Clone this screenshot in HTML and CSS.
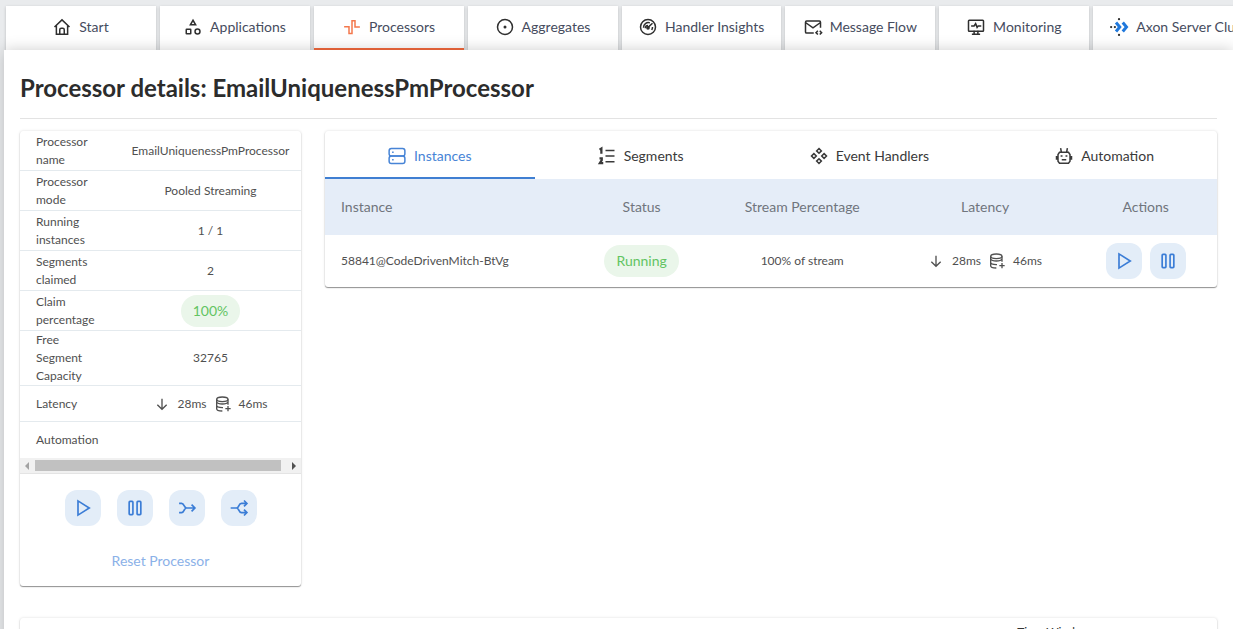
FILE: index.html
```html
<!DOCTYPE html>
<html lang="en">
<head>
<meta charset="utf-8">
<title>Processor details</title>
<link rel="stylesheet" href="styles.css">
</head>
<body>
<svg class="defs" aria-hidden="true">
  <symbol id="play" viewBox="0 0 24 24"><path d="M6 3.500v17l13.500-8.500z"/></symbol>
  <symbol id="pause" viewBox="0 0 24 24"><rect x="5" y="4" width="4.500" height="16" rx="1"/><rect x="14.500" y="4" width="4.500" height="16" rx="1"/></symbol>
  <symbol id="merge" viewBox="0 0 24 24"><path d="M2.500 6.500h3c3.500 0 2.500 5.500 6 5.500-3.500 0-2.500 5.500-6 5.500h-3M11 12h10M17.500 8l4 4-4 4"/></symbol>
  <symbol id="split" viewBox="0 0 24 24"><path d="M2 12h7c3.500 0 2-5.500 6-5.500h6M9 12c3.500 0 2 5.500 6 5.500h6M18 3l3.500 3.500L18 10M18 14l3.500 3.500L18 21"/></symbol>
  <symbol id="down" viewBox="0 0 24 24"><path d="M12 4v16M5 13l7 7 7-7"/></symbol>
  <symbol id="database" viewBox="0 0 24 24"><ellipse cx="11" cy="5" rx="8.500" ry="3.500"/><path d="M2.500 5v14c0 2 3.500 3.500 8.500 3.500M2.500 14c0 2 3.500 3.500 8.500 3.500h1M19.500 5v8M2.500 9c1 2 4 3 8.500 3s7.500-1 8.500-3M19.500 15v8M15.500 19h8"/></symbol>
</svg>

<nav class="nav">
  <a class="nav-tab" href="#start"><svg class="icon" viewBox="0 0 24 24"><path d="M2 12 12 2.500 22 12M4.500 10v11.500h15V10M9 21.500v-6a2 2 0 0 1 2-2h2a2 2 0 0 1 2 2v6"/></svg>Start</a>
  <a class="nav-tab" href="#applications"><svg class="icon" viewBox="0 0 24 24"><path d="m12 3 3.500 6h-7z"/><rect x="3" y="15" width="6" height="6" rx=".5"/><circle cx="18" cy="18" r="3.300"/></svg>Applications</a>
  <a class="nav-tab nav-tab-active" href="#processors"><svg class="icon" viewBox="0 0 24 24"><path d="M1.500 11.500H8v9h4v-17h4V12h6.500"/></svg>Processors</a>
  <a class="nav-tab" href="#aggregates"><svg class="icon" viewBox="0 0 24 24"><circle cx="12" cy="12" r="10"/><circle class="solid" cx="12" cy="12" r="1"/></svg>Aggregates</a>
  <a class="nav-tab" href="#insights"><svg class="icon" viewBox="0 0 24 24"><circle cx="12" cy="12" r="10"/><path d="M6 13a6.500 6.500 0 0 1 8.500-6.500M12 12.500 18 7M8.500 13.500a3.500 3.500 0 0 1 3.500-3.500M18 12c0 2-.5 3-1 4"/><circle class="solid" cx="12" cy="13" r="1.500"/></svg>Handler Insights</a>
  <a class="nav-tab" href="#messages"><svg class="icon" viewBox="0 0 24 24"><path d="M13 20H3.500A1.500 1.500 0 0 1 2 18.500v-13A1.500 1.500 0 0 1 3.500 4h17A1.500 1.500 0 0 1 22 5.500V13M2 6l10 7 10-7M18.500 17 16 19.500l2.500 2.500M21 17l2.500 2.500L21 22"/></svg>Message Flow</a>
  <a class="nav-tab" href="#monitoring"><svg class="icon" viewBox="0 0 24 24"><rect x="2" y="3" width="20" height="14.500" rx="1"/><path d="M5.500 10.500h4l2-3 2 5 1.500-2h4M9.500 17v4M14.500 17v4M6.500 21.500h11"/></svg>Monitoring</a>
  <a class="nav-tab" href="#cluster"><svg class="icon" viewBox="0 0 24 24"><path class="chevrons" d="m8 6 5 6-5 6M17 6l5 6-5 6"/><g class="dots"><circle cx="12" cy="1.500" r="1.500"/><circle cx="12" cy="22.500" r="1.500"/><circle cx="1.500" cy="12" r="1.500"/><circle cx="6.500" cy="12" r="1.500"/></g></svg>Axon Server Cluster</a>
</nav>

<main class="page">
  <h1 class="title">Processor details: EmailUniquenessPmProcessor</h1>
  <div class="columns">
    <section class="card details">
      <table class="facts">
        <tbody>
          <tr><th scope="row">Processor name</th><td>EmailUniquenessPmProcessor</td></tr>
          <tr><th scope="row">Processor mode</th><td>Pooled Streaming</td></tr>
          <tr><th scope="row">Running instances</th><td>1 / 1</td></tr>
          <tr><th scope="row">Segments claimed</th><td>2</td></tr>
          <tr><th scope="row">Claim percentage</th><td><span class="chip">100%</span></td></tr>
          <tr><th scope="row">Free Segment Capacity</th><td>32765</td></tr>
          <tr class="single"><th scope="row">Latency</th><td><span class="latency"><svg class="icon"><use href="#down"/></svg>28ms<svg class="icon"><use href="#database"/></svg>46ms</span></td></tr>
          <tr class="single"><th scope="row">Automation</th><td></td></tr>
        </tbody>
      </table>
      <div class="scroll-track"><span class="scroll-left"></span><span class="scroll-thumb"></span><span class="scroll-right"></span></div>
      <div class="actions">
        <button class="action" aria-label="Start"><svg class="icon"><use href="#play"/></svg></button>
        <button class="action" aria-label="Pause"><svg class="icon"><use href="#pause"/></svg></button>
        <button class="action" aria-label="Merge"><svg class="icon"><use href="#merge"/></svg></button>
        <button class="action" aria-label="Split"><svg class="icon"><use href="#split"/></svg></button>
      </div>
      <button class="reset">Reset Processor</button>
    </section>

    <section class="card instances">
      <div class="tabs" role="tablist">
        <button class="tab tab-active" role="tab" aria-selected="true"><svg class="icon" viewBox="0 0 24 24"><rect x="1.500" y="2" width="21" height="10" rx="3"/><rect x="1.500" y="12" width="21" height="10" rx="3"/><path d="M5.500 7h2M5.500 17h2"/></svg>Instances</button>
        <button class="tab" role="tab"><svg class="icon" viewBox="0 0 24 24"><path d="M10 4.500h12M10 12h12M10 19.500h12"/><path class="digits" d="M2 3.500 4.500 2v7M2 15h3v2.500L2.500 21.500H7"/></svg>Segments</button>
        <button class="tab" role="tab"><svg class="icon" viewBox="0 0 24 24"><path d="m12 2 3.200 3.200L12 8.400 8.800 5.200zM12 15.600l3.200 3.200L12 22l-3.200-3.200zM5.200 8.800 8.400 12l-3.200 3.200L2 12zM18.800 8.800 22 12l-3.200 3.200-3.200-3.200z"/></svg>Event Handlers</button>
        <button class="tab" role="tab"><svg class="icon" viewBox="0 0 24 24"><path d="M6 7h12l2 3v9l-2 2.500H6L4 19v-9zM8.500 7l-1-5.500M15.500 7l1-5.500M2 12v5M22 12v5M9 17h6M7.500 12h2.500M14 12h2.500"/></svg>Automation</button>
      </div>
      <table class="grid">
        <thead>
          <tr><th scope="col" class="col-instance">Instance</th><th scope="col" class="col-status">Status</th><th scope="col" class="col-stream">Stream Percentage</th><th scope="col" class="col-latency">Latency</th><th scope="col">Actions</th></tr>
        </thead>
        <tbody>
          <tr>
            <td class="col-instance">58841@CodeDrivenMitch-BtVg</td>
            <td><span class="chip">Running</span></td>
            <td>100% of stream</td>
            <td><span class="latency"><svg class="icon"><use href="#down"/></svg>28ms<svg class="icon"><use href="#database"/></svg>46ms</span></td>
            <td><div class="row-actions">
              <button class="action" aria-label="Start instance"><svg class="icon"><use href="#play"/></svg></button>
              <button class="action" aria-label="Pause instance"><svg class="icon"><use href="#pause"/></svg></button>
            </div></td>
          </tr>
        </tbody>
      </table>
    </section>
  </div>
  <section class="card metrics"><span class="metrics-label">Time Window</span></section>
</main>
</body>
</html>
```
FILE: styles.css
```css
* { box-sizing: border-box; }

body {
  margin: 0;
  height: 100vh;
  overflow: hidden;
  background: #e9ebed;
  color: #505050;
  font-family: Lato, sans-serif;
  font-size: 12px;
  line-height: 18px;
}

button { border: 0; background: none; font: inherit; cursor: pointer; }

.defs { position: absolute; width: 0; height: 0; }

.icon {
  flex: none;
  width: 18px;
  height: 18px;
  overflow: visible;
  fill: none;
  stroke: currentColor;
  stroke-width: 2;
}

.solid { fill: currentColor; }
.digits { stroke-width: 3; }

/* Top navigation */
.nav {
  display: flex;
  gap: 4px;
  padding: 6px 0 0 6px;
}

.nav-tab {
  display: flex;
  flex: none;
  align-items: center;
  justify-content: center;
  gap: 8px;
  min-width: 150px;
  height: 44px;
  padding: 0 17px 2px;
  background: #fff;
  box-shadow: 0 1px 3px #0003;
  color: #464c5e;
  font-size: 14px;
  text-decoration: none;
  white-space: nowrap;
}

.nav-tab .icon { color: #2f2f2f; }
.nav-tab .icon .chevrons { stroke: #1f78dc; stroke-width: 4; }
.nav-tab .icon .dots { fill: #2f2f2f; stroke: none; }

.nav-tab-active {
  padding-bottom: 0;
  border-bottom: 2px solid #f4693c;
}

.nav-tab-active .icon { color: #f4784c; }

/* Page panel */
.page {
  position: relative;
  min-height: 100vh;
  margin-left: 4px;
  padding: 20px 16px;
  background: #fff;
  box-shadow: 0 0 14px #0003;
}

.title {
  margin: 0 0 12px;
  padding-bottom: 12px;
  border-bottom: 1px solid #e3e3e3;
  color: #2c2c2c;
  font-size: 24px;
  font-weight: 700;
  line-height: 36px;
}

.columns {
  display: grid;
  grid-template-columns: 281px minmax(0, 1fr);
  align-items: start;
  gap: 24px;
}

.card {
  border-radius: 3px;
  background: #fff;
  box-shadow: 0 1px 1px #0006, 0 0 3px #0002;
}

.facts {
  width: 100%;
  table-layout: fixed;
  border-collapse: separate;
  border-spacing: 0;
}

.facts th, .facts td { height: 40px; padding: 0; border-bottom: 1px solid #e4eaee; text-align: center; }
.facts .single > * { height: 36px; }
.facts tr:last-child > * { border-bottom: 0; }
.facts th { width: 100px; padding: 0 16px; font-weight: 400; text-align: left; }

.chip {
  display: inline-block;
  padding: 7px 12px;
  border-radius: 16px;
  background: #eaf6ea;
  color: #62c462;
  font-size: 14px;
  vertical-align: middle;
}

.latency { display: inline-flex; align-items: center; gap: 8px; vertical-align: middle; }
.latency .icon { width: 16px; height: 16px; }

.scroll-track {
  display: flex;
  align-items: center;
  height: 16px;
  background: #f1f1f1;
  border-bottom: 1px solid #e4e4e4;
}

.scroll-thumb { flex: 1; height: 11px; background: #c1c1c1; }
.scroll-left, .scroll-right { border: 4px solid transparent; }
.scroll-left { margin: 0 6px 0 5px; border-right-color: #a3a3a3; border-left-width: 0; }
.scroll-right { margin: 0 5px 0 11px; border-left-color: #505050; border-right-width: 0; }

.actions { display: flex; justify-content: center; gap: 16px; padding: 16px 0; }
.row-actions { display: flex; justify-content: center; gap: 8px; }

.action {
  display: flex;
  align-items: center;
  justify-content: center;
  width: 36px;
  height: 36px;
  padding: 0;
  border-radius: 12px;
  background: #e3edf8;
  color: #3b7dd6;
}

.action .icon { width: 20px; height: 20px; }

.reset {
  display: block;
  margin: 0 auto;
  padding: 10px 16px 16px;
  color: #8bb1e8;
  font-size: 14px;
}

/* Instance tabs and table */
.tabs { display: flex; }

.tab {
  display: flex;
  flex: 1 1 auto;
  align-items: center;
  justify-content: center;
  gap: 8px;
  height: 48px;
  padding: 4px 0 0;
  border-bottom: 2px solid transparent;
  color: #3a3a3a;
  font-size: 14px;
}

.tab-active { border-color: #3f7fd2; color: #4784d6; }

.grid { width: 100%; table-layout: fixed; border-collapse: collapse; }
.grid th { height: 56px; padding: 0; background: #e5edf8; color: #70757d; font-size: 14px; font-weight: 400; }
.grid td { height: 52px; padding: 0; text-align: center; }
.grid .col-instance { width: 28%; padding-left: 16px; text-align: left; }
.col-status { width: 15%; }
.col-stream { width: 21%; }
.col-latency { width: 20%; }

.metrics { margin-top: 32px; height: 300px; padding: 5px 126px; text-align: right; }
.metrics-label { color: #333; font-size: 12px; }
```
